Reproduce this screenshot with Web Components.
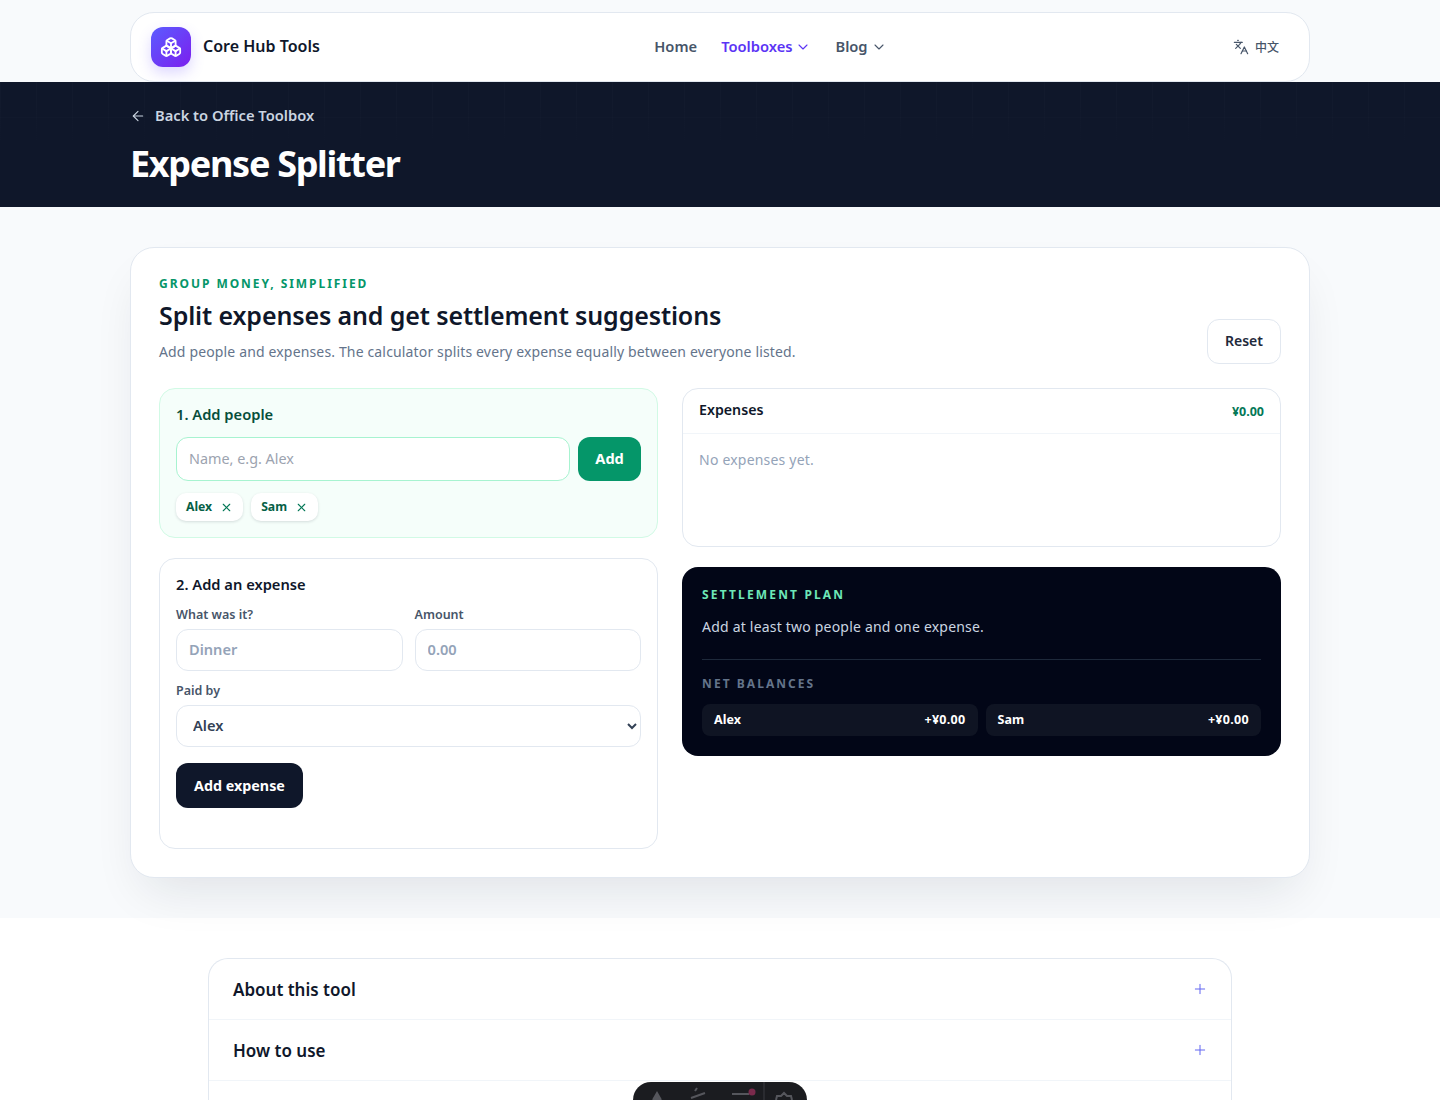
<!DOCTYPE html>
<html lang="en">
<head>
<meta charset="utf-8">
<title>Expense Splitter</title>
<style>
  html, body { margin: 0; padding: 0; height: 1100px; overflow: hidden; }
  body { background: #fff; font-family: "Noto Sans", sans-serif; color: #0f172a; position: relative; }
  .band { display: block; background: #f8fafc; padding: 40px 130px; }
</style>
</head>
<body>
<site-nav></site-nav>
<page-hero back="Back to Office Toolbox" title="Expense Splitter"></page-hero>
<div class="band"><splitter-app></splitter-app></div>
<faq-list></faq-list>
<floating-dock></floating-dock>

<script>
const icon = (size, body, sw = 2) => `<svg width="${size}" height="${size}" viewBox="0 0 24 24" fill="none" stroke="currentColor" stroke-width="${sw}" stroke-linecap="round" stroke-linejoin="round">${body}</svg>`
const chevron = icon(16, '<path d="m6 9 6 6 6-6"/>', 1.6)

class SiteNav extends HTMLElement {
    constructor() {
        super()
        this.attachShadow({ mode: 'open' })
    }

    connectedCallback() {
        this.shadowRoot.innerHTML = `
      <style>
        :host { display: block; background: #f8fafc; padding: 12px 130px 0; }
        .bar {
          height: 70px;
          box-sizing: border-box;
          display: flex;
          justify-content: space-between;
          align-items: center;
          padding: 0 20px;
          background: #fff;
          border: 1px solid #e2e8f0;
          border-radius: 24px;
        }
        .brand { display: flex; align-items: center; gap: 12px; font-size: 16px; font-weight: 600; color: #0f172a; }
        .brand b { font-weight: 600; padding-bottom: 2px; }
        .logo {
          width: 40px; height: 40px; border-radius: 12px;
          display: flex; align-items: center; justify-content: center;
          color: #fff;
          background: linear-gradient(135deg, #5b5cff, #7c1fee);
          box-shadow: 0 6px 14px rgba(99, 72, 255, .22);
        }
        nav { display: flex; align-items: center; gap: 24px; font-size: 14.7px; font-weight: 600; color: #475569; }
        nav span { display: flex; align-items: center; gap: 3px; }
        nav b { font-weight: 600; padding-bottom: 2px; }
        nav .on { color: #5b34f5; }
        .lang { display: flex; align-items: center; gap: 6px; padding: 0 10px 0 12px; font-size: 12px; font-weight: 500; color: #475569; }
        .lang span { padding-bottom: 2px; font-family: "Noto Sans CJK SC", "Noto Sans", sans-serif; }
      </style>
      <div class="bar">
        <div class="brand">
          <span class="logo">${icon(22, '<path d="M2.97 12.92A2 2 0 0 0 2 14.63v3.24a2 2 0 0 0 .97 1.71l3 1.8a2 2 0 0 0 2.06 0L12 19v-5.5l-5-3-4.03 2.42Z"/><path d="m7 16.5-4.74-2.85"/><path d="m7 16.5 5-3"/><path d="M7 16.5v5.17"/><path d="M12 13.5V19l3.97 2.38a2 2 0 0 0 2.06 0l3-1.8a2 2 0 0 0 .97-1.71v-3.24a2 2 0 0 0-.97-1.71L17 10.5l-5 3Z"/><path d="m17 16.5-5-3"/><path d="m17 16.5 4.74-2.85"/><path d="M17 16.5v5.17"/><path d="M7.97 4.42A2 2 0 0 0 7 6.13v4.37l5 3 5-3V6.13a2 2 0 0 0-.97-1.71l-3-1.8a2 2 0 0 0-2.06 0l-3 1.8Z"/><path d="M12 8 7.26 5.15"/><path d="m12 8 4.74-2.85"/><path d="M12 13.5V8"/>')}</span>
          <b>Core Hub Tools</b>
        </div>
        <nav>
          <span><b>Home</b></span>
          <span class="on"><b>Toolboxes</b> ${chevron}</span>
          <span><b>Blog</b> ${chevron}</span>
        </nav>
        <div class="lang">
          ${icon(16, '<path d="m5 8 6 6"/><path d="m4 14 6-6 2-3"/><path d="M2 5h12"/><path d="M7 2h1"/><path d="m22 22-5-10-5 10"/><path d="M14 18h6"/>', 1.8)}
          <span>中文</span>
        </div>
      </div>
    `
    }
}

class PageHero extends HTMLElement {
    constructor() {
        super()
        this.attachShadow({ mode: 'open' })
    }

    connectedCallback() {
        this.shadowRoot.innerHTML = `
      <style>
        :host {
          display: block;
          height: 125px;
          box-sizing: border-box;
          padding: 21px 130px 0;
          background-color: #0f172a;
          background-image:
            linear-gradient(to bottom, transparent 20%, #0f172a 50%),
            linear-gradient(rgba(255,255,255,.012) 1px, transparent 1px),
            linear-gradient(90deg, rgba(255,255,255,.012) 1px, transparent 1px);
          background-size: 100% 100%, 36px 36px, 36px 36px;
          background-position: 0 0, 0 -1px, 0 -1px;
        }
        .back { display: flex; align-items: center; gap: 9px; height: 24px; font-size: 14.7px; font-weight: 600; color: #cbd5e1; }
        .back svg { color: #cbd5e1; margin-top: 1px; }
        h1 { margin: 13px 0 0; font-size: 36px; line-height: 48px; font-weight: 700; letter-spacing: -1.3px; color: #fff; }
      </style>
      <div class="back">${icon(16, '<path d="m12 19-7-7 7-7"/><path d="M19 12H5"/>', 1.7)}${this.getAttribute('back')}</div>
      <h1>${this.getAttribute('title')}</h1>
    `
    }
}

class PanelBox extends HTMLElement {
    constructor() {
        super()
        this.attachShadow({ mode: 'open' })
        this.shadowRoot.innerHTML = `
      <style>
        :host {
          display: block;
          box-sizing: border-box;
          padding: 16px;
          border: 1px solid #e2e8f0;
          border-radius: 16px;
          background: #fff;
        }
        :host([tone="green"]) { background: #f5fefa; border-color: #d1fae5; }
      </style>
      <slot></slot>
    `
    }
}

class PersonChip extends HTMLElement {
    constructor() {
        super()
        this.attachShadow({ mode: 'open' })
        this.shadowRoot.innerHTML = `
      <style>
        :host {
          display: inline-flex;
          align-items: center;
          gap: 8px;
          height: 28px;
          padding: 0 10px;
          border-radius: 10px;
          background: #fff;
          box-shadow: 0 1px 3px rgba(15, 23, 42, .14);
          font-size: 12.2px;
          font-weight: 700;
          color: #065f46;
        }
        span { padding-bottom: 2px; }
        svg { color: #047857; }
      </style>
      <span><slot></slot></span>
      ${icon(13, '<path d="M18 6 6 18"/><path d="m6 6 12 12"/>', 2)}
    `
    }
}

class SplitterApp extends HTMLElement {
    constructor() {
        super()
        this.attachShadow({ mode: 'open' })
    }

    connectedCallback() {
        this.shadowRoot.innerHTML = `
      <style>
        :host {
          display: block;
          box-sizing: border-box;
          height: 631px;
          padding: 28px;
          background: #fff;
          border: 1px solid #e2e8f0;
          border-radius: 24px;
          box-shadow: 0 24px 50px -14px rgba(15, 23, 42, .11);
        }
        * { box-sizing: border-box; font-family: "Noto Sans", sans-serif; }
        .head { display: flex; justify-content: space-between; align-items: flex-end; margin-bottom: 26px; }
        .eyebrow { font-size: 12px; line-height: 16px; font-weight: 700; letter-spacing: 1.95px; color: #059669; }
        h2 { margin: 6px 0 8px; font-size: 25px; line-height: 34px; font-weight: 600; letter-spacing: -.12px; color: #0f172a; }
        .sub { font-size: 14px; line-height: 22px; letter-spacing: .15px; color: #64748b; position: relative; top: 1px; }
        .reset {
          height: 45px; width: 74px; margin-bottom: -2px; padding-bottom: 2px;
          display: flex; align-items: center; justify-content: center;
          border: 1px solid #e2e8f0; border-radius: 12px; background: #fff;
          font-size: 14px; font-weight: 600; color: #1e293b;
        }
        .cols { display: grid; grid-template-columns: 5fr 6fr; gap: 24px; align-items: start; }
        .stack { display: flex; flex-direction: column; gap: 20px; }
        h3 { margin: 0; font-size: 14.7px; line-height: 18px; padding-bottom: 2px; font-weight: 600; color: #0f172a; }
        .people { height: 150px; }
        .people h3 { color: #064e3b; margin-bottom: 12px; }
        .row { display: flex; gap: 8px; }
        input, select {
          display: block; width: 100%; background: #fff; outline: none;
          border: 1px solid #e2e8f0; border-radius: 12px; font-size: 14.6px; color: #334155;
        }
        input { padding: 0 12px 2px; }
        input::placeholder { color: #94a3b8; opacity: 1; font-weight: 600; }
        .name { height: 44px; border-color: #a7f3d0; font-size: 14.4px; }
        .name::placeholder { color: #9ca3af; font-weight: 400; }
        .add {
          height: 44px; width: 63px; flex: none; padding-bottom: 2px;
          display: flex; align-items: center; justify-content: center;
          border-radius: 12px; background: #059669; color: #fff; font-size: 14.6px; font-weight: 700;
        }
        .chips { display: flex; gap: 8px; margin-top: 12px; }
        .form { height: 291px; }
        .form h3 { margin-bottom: 12px; }
        .fields { display: grid; grid-template-columns: 1fr 1fr; gap: 12px; }
        label { display: block; font-size: 12.5px; line-height: 16px; font-weight: 600; color: #475569; margin-bottom: 6px; }
        .fields input, select { height: 42px; }
        .paid { margin-top: 12px; }
        select { padding: 0 0 2px 12px; font-weight: 600; }
        .save {
          display: inline-flex; align-items: center; justify-content: center;
          height: 45px; width: 127px; margin-top: 16px;
          border-radius: 12px; background: #0f172a; color: #fff; font-size: 14.3px; font-weight: 700;
        }
        .list { height: 159px; padding: 0; }
        .list h3 { font-size: 14.2px; }
        .list-head { display: flex; justify-content: space-between; align-items: center; height: 45px; padding: 0 16px; border-bottom: 1px solid #f1f5f9; }
        .total { font-size: 12.5px; font-weight: 700; color: #047857; }
        .empty { padding: 15px 16px; font-size: 14px; line-height: 22px; letter-spacing: .2px; color: #94a3b8; }
        .plan { height: 189px; padding: 20px; border-radius: 16px; background: #020617; }
        .plan .tag { font-size: 12px; line-height: 16px; font-weight: 700; letter-spacing: 2.15px; color: #6ee7b7; }
        .plan p { margin: 13px 0 0; font-size: 14px; line-height: 22px; letter-spacing: .2px; color: #cbd5e1; }
        .rule { height: 1px; margin: 21px 0 16px; background: #1e293b; }
        .plan .net { font-size: 12px; line-height: 16px; font-weight: 700; letter-spacing: 2.05px; color: #64748b; }
        .nets { display: grid; grid-template-columns: 1fr 1fr; gap: 8px; margin-top: 12px; }
        .nets div {
          display: flex; justify-content: space-between; align-items: center;
          height: 32px; padding: 0 12px 2px; border-radius: 8px; background: #0f1423;
          font-size: 12.5px; font-weight: 700; color: #fff;
        }
        .nets span + span { letter-spacing: .3px; }
      </style>
      <div class="head">
        <div>
          <div class="eyebrow">GROUP MONEY, SIMPLIFIED</div>
          <h2>Split expenses and get settlement suggestions</h2>
          <div class="sub">Add people and expenses. The calculator splits every expense equally between everyone listed.</div>
        </div>
        <div class="reset">Reset</div>
      </div>
      <div class="cols">
        <div class="stack">
          <panel-box tone="green" class="people">
            <h3>1. Add people</h3>
            <div class="row">
              <input class="name" placeholder="Name, e.g. Alex">
              <div class="add">Add</div>
            </div>
            <div class="chips">
              <person-chip>Alex</person-chip>
              <person-chip>Sam</person-chip>
            </div>
          </panel-box>
          <panel-box class="form">
            <h3>2. Add an expense</h3>
            <div class="fields">
              <div><label>What was it?</label><input placeholder="Dinner"></div>
              <div><label>Amount</label><input placeholder="0.00"></div>
            </div>
            <div class="paid">
              <label>Paid by</label>
              <select><option>Alex</option><option>Sam</option></select>
            </div>
            <div class="save">Add expense</div>
          </panel-box>
        </div>
        <div class="stack">
          <panel-box class="list">
            <div class="list-head"><h3>Expenses</h3><span class="total">¥0.00</span></div>
            <div class="empty">No expenses yet.</div>
          </panel-box>
          <div class="plan">
            <div class="tag">SETTLEMENT PLAN</div>
            <p>Add at least two people and one expense.</p>
            <div class="rule"></div>
            <div class="net">NET BALANCES</div>
            <div class="nets">
              <div><span>Alex</span><span>+¥0.00</span></div>
              <div><span>Sam</span><span>+¥0.00</span></div>
            </div>
          </div>
        </div>
      </div>
    `
    }
}

class FaqList extends HTMLElement {
    constructor() {
        super()
        this.attachShadow({ mode: 'open' })
    }

    connectedCallback() {
        const items = ['About this tool', 'How to use']
        this.shadowRoot.innerHTML = `
      <style>
        :host {
          display: block; height: 142px; box-sizing: border-box;
          margin: 40px 208px 0;
          border: 1px solid #e2e8f0; border-bottom: 0;
          border-radius: 20px 20px 0 0;
          background: #fff;
        }
        .item {
          display: flex; justify-content: space-between; align-items: center;
          height: 61px; box-sizing: border-box; padding: 0 23px 0 24px;
          border-bottom: 1px solid #f1f5f9;
          font-size: 17px; font-weight: 600; color: #0f172a;
        }
        svg { color: #6366f1; }
      </style>
      ${items.map(t => `<div class="item"><span>${t}</span>${icon(16, '<path d="M5 12h14"/><path d="M12 5v14"/>', 1.5)}</div>`).join('')}
    `
    }
}

class FloatingDock extends HTMLElement {
    constructor() {
        super()
        this.attachShadow({ mode: 'open' })
    }

    connectedCallback() {
        this.shadowRoot.innerHTML = `
      <style>
        :host {
          position: absolute;
          left: 633px;
          top: 1082px;
          width: 174px;
          height: 18px;
          border-radius: 22px 22px 0 0;
          background: #1b1c20;
          overflow: hidden;
        }
        svg { display: block; filter: blur(.6px); }
      </style>
      <svg width="174" height="18" fill="none" stroke="#55565c" stroke-width="2">
        <path d="M20 18 L24 11 L28 18" fill="#55565c"/>
        <path d="M58 16 L72 11 M62 9 L64 6"/>
        <path d="M99 12 H116"/>
        <circle cx="119" cy="10" r="3.5" fill="#7a2a4c" stroke="none"/>
        <path d="M131 0 V18" stroke="#3a3b40" stroke-width="1"/>
        <path d="M143 18 L144 14 L148 14 L151 11 L154 14 L158 14 L159 18"/>
      </svg>
    `
    }
}

customElements.define('site-nav', SiteNav)
customElements.define('page-hero', PageHero)
customElements.define('panel-box', PanelBox)
customElements.define('person-chip', PersonChip)
customElements.define('splitter-app', SplitterApp)
customElements.define('faq-list', FaqList)
customElements.define('floating-dock', FloatingDock)
</script>
</body>
</html>
